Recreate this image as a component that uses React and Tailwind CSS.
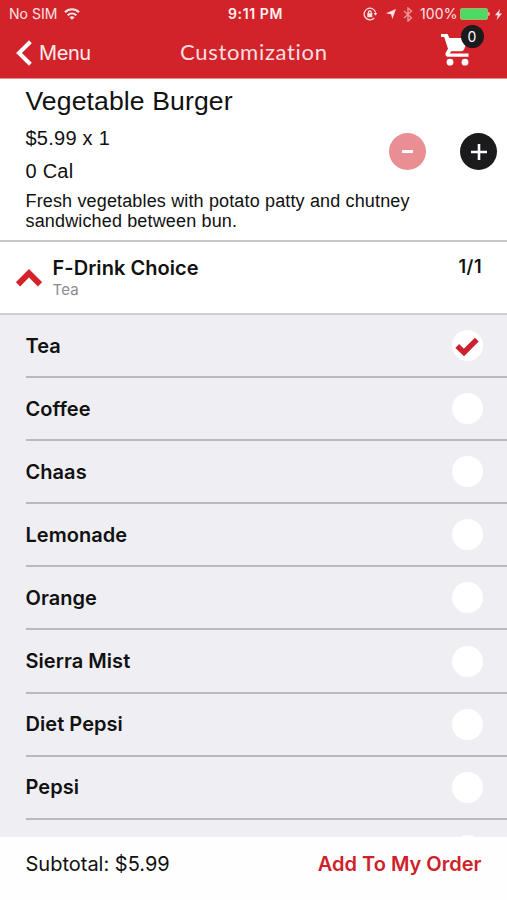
import React, { useState } from "react";

const drinks = [
  "Tea",
  "Coffee",
  "Chaas",
  "Lemonade",
  "Orange",
  "Sierra Mist",
  "Diet Pepsi",
  "Pepsi",
];

const StatusBar = () => (
  <div className="flex h-7 items-center text-[14px] leading-7 text-[#fbe3e4]">
    <div className="flex flex-1 items-center pl-[9px]">
      <span className="w-[49px] tracking-[0.05px] whitespace-nowrap">No SIM</span>
      <svg className="ml-[6px] h-[12px] w-4" viewBox="0 0 16 12" fill="none" stroke="currentColor" strokeWidth="2.1">
        <path d="M1 4.2C5 0.3 11 0.3 15 4.2" />
        <path d="M3.6 7.2C6.2 4.9 9.8 4.9 12.4 7.2" />
        <path d="M8 11.8L5.4 9.3C7 8 9 8 10.6 9.3Z" fill="currentColor" stroke="none" />
      </svg>
    </div>
    <span className="font-semibold tracking-[0.6px] text-[#fff1f1]">9:11 PM</span>
    <div className="flex flex-1 items-center justify-end pr-[5px]">
      <svg className="mr-px h-[14px] w-[14px]" viewBox="0 0 14 14" fill="none" stroke="currentColor" strokeWidth="1.3">
        <path d="M11.2 11A5.8 5.8 0 1 1 12.6 5.6" />
        <path d="M10.6 6H14.2L12.5 8.8Z" fill="currentColor" stroke="none" />
        <rect x="4.3" y="6.2" width="5" height="4" fill="currentColor" stroke="none" />
        <path d="M5.4 6.5V5.2a1.4 1.4 0 0 1 2.8 0V6.5" />
      </svg>
      <svg className="ml-2 h-[10px] w-[10px]" viewBox="0 0 11 11" fill="currentColor">
        <path d="M11 0L7 11L5.6 5.7L0 4.7Z" />
      </svg>
      <svg className="ml-[7px] h-[15px] w-[10px] opacity-60" viewBox="0 0 9 15" fill="none" stroke="currentColor" strokeWidth="1.4">
        <path d="M0.6 4L8 11L4.5 14V1L8 4L0.6 11" />
      </svg>
      <span className="ml-[7px] w-[38px] text-[14px] tracking-[0.1px] whitespace-nowrap">100%</span>
      <div className="ml-[2px] h-[12px] w-[28px] rounded-[2px] border border-[#a8b45b] bg-[#4cd964]" />
      <div className="h-1 w-[2px] rounded-r bg-[#f0a0a0]" />
      <svg className="ml-[5px] h-[11px] w-[7px]" viewBox="0 0 7 11" fill="currentColor">
        <path d="M5 0L0 6.2H2.8L1.6 11L7 4.6H4Z" />
      </svg>
    </div>
  </div>
);

const Navbar = () => (
  <div className="flex h-[49px] items-center">
    <button className="flex w-[180px] items-center pl-[16px] text-[20px] text-[#fdeeee]">
      <svg className="h-[26px] w-4" viewBox="0 0 16 26" fill="none" stroke="white" strokeWidth="4">
        <path d="M14.4 1.8L3 13L14.4 24.2" />
      </svg>
      <span className="ml-[7px] tracking-[-0.4px]">Menu</span>
    </button>
    <h1 className="pb-[2px] font-['Lato',sans-serif] text-[22px] tracking-[0.7px] text-[#fbdfe0]">Customization</h1>
    <div className="flex flex-1 justify-end pr-[34px] pb-[6px]">
      <div className="relative h-[32px] w-[32px]">
        <svg className="h-full w-full" viewBox="0 0 32 32" fill="white">
          <path d="M0 0H6.6L8.4 4H27.5L23 15.4Q22.1 17.3 20 17.3H10.2L8.8 19.4H27.5V22.8H7.6C4.8 22.8 3.8 20.5 5 18.2L7 14.8L3.2 3H0Z" />
          <circle cx="9" cy="28.2" r="3.4" />
          <circle cx="24" cy="28.2" r="3.4" />
        </svg>
        <span className="absolute -top-[9px] left-[19.5px] flex h-[23px] w-[23px] items-center justify-center rounded-full bg-[#1b1a1c] text-[14px] text-white">
          0
        </span>
      </div>
    </div>
  </div>
);

const App = () => {
  const [selected, setSelected] = useState("Tea");
  const [open, setOpen] = useState(true);
  const [quantity, setQuantity] = useState(1);

  return (
    <div className="flex h-[900px] w-[507px] flex-col overflow-hidden bg-white font-['Inter',sans-serif] text-[#111]">
      <header className="h-[79px] shrink-0 border-b border-[#e58f93] bg-[#d2232a]">
        <StatusBar />
        <Navbar />
      </header>

      {/* Item details */}
      <section className="flex h-[163px] shrink-0 justify-between border-b-2 border-[#c8c7cc] pr-[10px] pl-[25.5px] font-['Liberation_Sans',sans-serif]">
        <div className="whitespace-nowrap">
          <h2 className="mt-[5px] text-[26.6px] leading-[34px] tracking-[0.1px]">Vegetable Burger</h2>
          <p className="mt-[4px] text-[20px] leading-[33px] tracking-[0.25px]">
            {`$${(5.99 * quantity).toFixed(2)} x ${quantity}`}
          </p>
          <p className="text-[20px] leading-[33px] tracking-[0.25px]">0 Cal</p>
          <p className="mt-[3px] text-[18px] leading-[20px] tracking-[0.15px]">
            Fresh vegetables with potato patty and chutney
            <br />
            sandwiched between bun.
          </p>
        </div>
        <div className="mt-[54px] -ml-10 flex gap-[34px]">
          <button
            onClick={() => setQuantity(Math.max(1, quantity - 1))}
            className="flex h-[37px] w-[37px] items-center justify-center rounded-full bg-[#e98f93]"
          >
            <span className="h-[3px] w-[11px] bg-white" />
          </button>
          <button
            onClick={() => setQuantity(quantity + 1)}
            className="flex h-[37px] w-[37px] items-center justify-center rounded-full bg-[#1b1a1c]"
          >
            <svg className="h-4 w-4" viewBox="0 0 16 16" stroke="white" strokeWidth="2.6">
              <path d="M8 0V16M0 8H16" />
            </svg>
          </button>
        </div>
      </section>

      {/* Choice group */}
      <section
        onClick={() => setOpen(!open)}
        className="flex h-[73px] shrink-0 border-b-2 border-[#cfced2] pr-[25px] pl-[16px]"
      >
        <svg className="mt-[26px] h-[19px] w-[26px]" viewBox="0 0 26 19" fill="none" stroke="#d2232a" strokeWidth="6">
          <path d="M2 16.3L13 5.2L24 16.3" />
        </svg>
        <div className="ml-[10.5px] flex-1">
          <h3 className="mt-[14px] text-[20px] leading-6 font-semibold tracking-[0.05px]">F-Drink Choice</h3>
          <p className="text-[15px] leading-[19px] tracking-[0.2px] text-[#8b8b8b]">{selected}</p>
        </div>
        <span className="mt-[13px] text-[18px] leading-6 font-semibold tracking-[0.5px]">1/1</span>
      </section>

      <ul className="min-h-0 flex-1 overflow-hidden bg-[#efeef3] pl-[25.5px]">
        {open &&
          drinks.map((drink) => (
            <li
              key={drink}
              onClick={() => setSelected(drink)}
              className="flex h-[63.1px] items-center justify-between border-b-2 border-[#bab9be] pr-[24.5px]"
            >
              <span className="text-[20px] leading-6 font-semibold tracking-[0.05px]">{drink}</span>
              <span className="flex h-[31px] w-[31px] items-center justify-center rounded-full bg-white">
                {selected === drink && (
                  <svg className="mt-[3px] h-[20px] w-[24px]" viewBox="0 0 24 20" fill="none" stroke="#cf202f" strokeWidth="5.4">
                    <path d="M2.2 9L9 15.4L21.8 2.6" />
                  </svg>
                )}
              </span>
            </li>
          ))}
        {/* Top of the next row, mostly under the footer */}
        {open && (
          <li className="flex justify-end pt-[15.5px] pr-[24.5px]">
            <span className="h-[31px] w-[31px] rounded-full bg-white" />
          </li>
        )}
      </ul>

      <footer className="flex h-[63.5px] shrink-0 items-start justify-between bg-[#fefefe] px-[25.5px] pt-[15px] text-[20px] leading-6">
        <span>{`Subtotal: $${(5.99 * quantity).toFixed(2)}`}</span>
        <button className="font-semibold text-[#ce2129]">Add To My Order</button>
      </footer>
    </div>
  );
};

export default App;
